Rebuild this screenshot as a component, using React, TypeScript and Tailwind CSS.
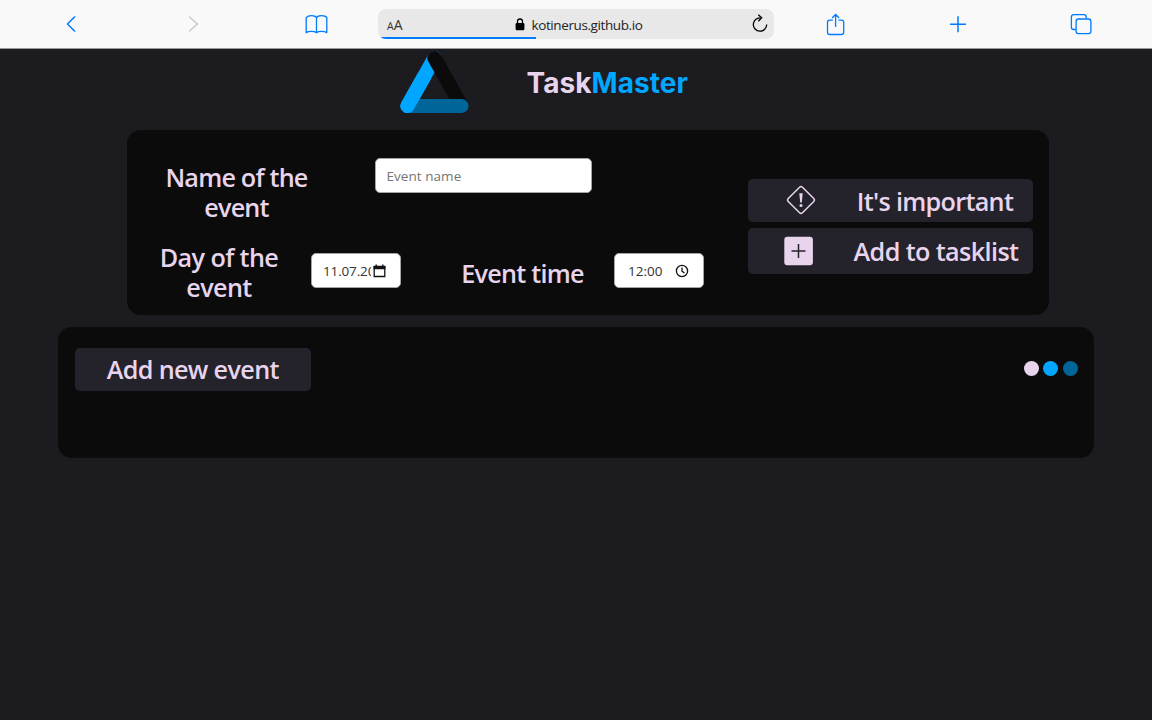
import React from "react";

const ui = "font-['Open_Sans','Noto_Sans',sans-serif]";
const heading = "font-semibold text-[25.2px] leading-[30px] text-[#e8d5ed] whitespace-nowrap";

function Toolbar() {
  return (
    <header className="grid h-[49px] grid-cols-[122.5px_122.5px_122.5px_396px_122.5px_122.5px_122.5px] items-center justify-center border-b border-[#9a9a9c] bg-[#f9f9f9] text-[#007aff]">
      <svg className="mx-auto h-6 w-6" viewBox="0 0 24 24" fill="none" stroke="currentColor" strokeWidth="1.5">
        <path d="M15 4.5 7.500 12l7.500 7.500" />
      </svg>
      <svg className="mx-auto h-6 w-6 text-[#cbcbcb]" viewBox="0 0 24 24" fill="none" stroke="currentColor" strokeWidth="1.5">
        <path d="m7 4.5 8.3 7.5L7 19.5" />
      </svg>
      <svg className="mx-auto h-6 w-6" viewBox="0 0 24 24" fill="none" stroke="currentColor" strokeWidth="1.300" strokeLinejoin="round">
        <path d="M11.500 5.700C10 3 3.200 3 1.200 5.700v15c2-1.700 8.300-1.700 10.300 0 2-1.700 8-1.700 10.300 0v-15C20 3 13 3 11.500 5.700v15" />
      </svg>
      <div className="relative flex h-[30px] items-center overflow-hidden rounded-[8px] bg-[#e8e8e8] text-[#222]">
        <div className="flex w-[137px] items-baseline pl-[9px] pt-[2px] text-[#333]">
          <span className="text-[10.500px] leading-none">A</span>
          <span className="text-[14px] leading-none">A</span>
        </div>
        <svg className="h-[13px] w-[10px]" viewBox="0 0 10 13">
          <rect x="0.600" y="5" width="8.800" height="7.200" rx="1.300" fill="#000" />
          <path d="M2.500 6V3.500a2.500 2.500 0 0 1 5 0V6" fill="none" stroke="#000" strokeWidth="1.300" />
        </svg>
        <span className="ml-[6.500px] mt-[2px] flex-1 whitespace-nowrap text-[13.500px] tracking-[-0.400px]">kotinerus.github.io</span>
        <svg className="mr-[5.500px] h-5 w-[18px]" viewBox="0 0 18 20" fill="none" stroke="#000" strokeWidth="1.300">
          <path d="M9.500 3.800A6.700 6.700 0 1 0 15.700 10.500" />
          <path d="m7.300.700 3.400 3.100-3.400 3.500" />
        </svg>
        <div className="absolute bottom-0 left-0 h-[2px] w-[158px] bg-[#007aff]" />
      </div>
      <svg className="mx-auto h-6 w-6" viewBox="0 0 24 24" fill="none" stroke="currentColor" strokeWidth="1.300">
        <path d="M9.800 8.200H6.700Q4.500 8.200 4.500 10.400v9.800Q4.500 22.500 6.700 22.500h11.800q2.200 0 2.200-2.300v-9.800q0-2.200-2.200-2.200H15.500M12.600 15V2.500M9.100 6l3.500-3.500L16.100 6" />
      </svg>
      <svg className="mx-auto h-6 w-6" viewBox="0 0 24 24" stroke="currentColor" strokeWidth="1.500">
        <path d="M12 4.200v16M4 12.200h16" />
      </svg>
      <svg className="mx-auto h-6 w-6" viewBox="0 0 24 24" fill="none" stroke="currentColor" strokeWidth="1.300">
        <path d="M7.900 17.500H5.700q-2.300 0-2.300-2.300V4.900q0-2.300 2.300-2.300h10.200q2.300 0 2.300 2.300v1.900" />
        <rect x="8.100" y="7" width="14.800" height="14.600" rx="2.400" />
      </svg>
    </header>
  );
}

function Logo() {
  return (
    <svg className="h-[64px] w-[70px]" viewBox="0 0 70 64" strokeLinecap="round" strokeWidth="14.200" fill="none">
      <path d="M7.500 56 34.500 8" stroke="#00a6ff" />
      <path d="M34.500 8 61.500 56" stroke="#0b0b0b" />
      <path d="M7.500 56h54" stroke="#006699" />
      <path d="M7.500 56 24 26.700" stroke="#00a6ff" />
    </svg>
  );
}

function EventForm() {
  const input = "flex items-center rounded-[5px] border border-[#a5a5a8] bg-white text-[#333]";
  return (
    <section className="ml-[127px] flex h-[185.500px] w-[921.500px] rounded-[14px] bg-[#0b0b0b]">
      <div className="w-[620.500px]">
        <div className="flex pt-[28.500px]">
          <h2 className={`ml-[23.500px] mt-[4px] w-[172px] text-center tracking-[-0.800px] ${heading}`}>
            Name of the<br />event
          </h2>
          <div className={`ml-[52.500px] h-[35px] w-[217px] pl-[10.500px] pt-[1px] text-[13.500px] tracking-[0.050px] text-[#757575] ${input}`}>Event name</div>
        </div>
        <div className="mt-[20px] flex">
          <h2 className={`ml-[6px] w-[172px] text-center tracking-[-0.600px] ${heading}`}>
            Day of the<br />event
          </h2>
          <div className={`ml-[6px] mt-[11px] h-[35px] w-[90px] pl-[11px] text-[13.500px] ${input}`}>
            <span className="mt-[1px] w-[48px] overflow-hidden whitespace-nowrap tracking-[-0.150px]">11.07.2024</span>
            <svg className="ml-[2px] h-[14px] w-[13px]" viewBox="0 0 13 14">
              <path d="M1.200 2.500h10.600v10H1.200z" fill="none" stroke="#111" strokeWidth="1.300" />
              <path d="M.600 2h11.800v3.200H.600zM2.500.500h1.400v2H2.500zM9.100.500h1.400v2H9.100z" fill="#111" />
            </svg>
          </div>
          <h2 className={`ml-[50.500px] mt-[15.500px] w-[142px] text-center tracking-[-0.750px] ${heading}`}>Event time</h2>
          <div className={`ml-[20.500px] mt-[11px] h-[35px] w-[90px] pl-[13px] text-[13.500px] ${input}`}>
            <span className="mt-[1px] w-[47px]">12:00</span>
            <svg className="h-[14px] w-[14px]" viewBox="0 0 14 14" fill="none" stroke="#111" strokeWidth="1.300">
              <circle cx="7" cy="7" r="5.600" />
              <path d="M7 3.500v3.700l2.500 1.800" />
            </svg>
          </div>
        </div>
      </div>
      <div className="flex w-[285px] flex-col gap-[6px] pt-[49.500px]">
        <button className="flex h-[42.500px] items-center rounded-[5px] bg-[#24222b]">
          <svg className="-mt-[1px] ml-[38px] h-[30px] w-[30px]" viewBox="0 0 30 30" fill="none" stroke="#e8d5ed">
            <rect x="5" y="5" width="20" height="20" rx="2" transform="rotate(45 15 15)" strokeWidth="1.500" />
            <path d="M13.300 8.200h3.400l-.9 9.300h-1.600z" fill="#e8d5ed" stroke="none" />
            <circle cx="15" cy="20.500" r="1.500" fill="#e8d5ed" stroke="none" />
          </svg>
          <span className={`ml-[29.500px] mt-[2px] w-[180px] text-center tracking-[-0.700px] ${heading}`}>It's important</span>
        </button>
        <button className="flex h-[46px] items-center rounded-[5px] bg-[#24222b]">
          <svg className="ml-[36px] h-[30px] w-[30px]" viewBox="0 0 30 30">
            <rect x=".300" y=".700" width="28.600" height="28.600" rx="3" fill="#e8d5ed" />
            <path d="M14.500 8v14M7.500 15h14" stroke="#24222b" strokeWidth="1.500" />
          </svg>
          <span className={`ml-[30.500px] w-[184px] text-center tracking-[-0.600px] ${heading}`}>Add to tasklist</span>
        </button>
      </div>
    </section>
  );
}

function TaskList() {
  return (
    <section className="ml-[58px] mt-[12px] flex h-[131px] w-[1036px] items-start justify-between rounded-[14px] bg-[#0b0b0b] pl-[16.500px] pr-[16.500px] pt-[20.500px]">
      <button className="flex h-[43px] w-[236.500px] items-center justify-center rounded-[5px] bg-[#24222b]">
        <span className={`tracking-[-0.650px] ${heading}`}>Add new event</span>
      </button>
      <div className="mt-[13.500px] flex gap-[4.500px]">
        <div className="size-[15px] rounded-full bg-[#e8d5ed]" />
        <div className="size-[15px] rounded-full bg-[#00a6ff]" />
        <div className="size-[15px] rounded-full bg-[#006699]" />
      </div>
    </section>
  );
}

export default function App() {
  return (
    <div className={`h-[720px] w-[1152px] overflow-hidden bg-[#1c1b20] ${ui}`}>
      <Toolbar />
      <main>
        <div className="flex h-[80.500px] pl-[399.500px]">
          <div className="w-[127px] pt-[0.500px]"><Logo /></div>
          <h1 className="mt-[14px] whitespace-nowrap font-['Inter',sans-serif] text-[28px] font-bold leading-[40px] tracking-[0.050px] text-[#e8d5ed]">
            Task<span className="text-[#00a6ff]">Master</span>
          </h1>
        </div>
        <EventForm />
        <TaskList />
      </main>
    </div>
  );
}
